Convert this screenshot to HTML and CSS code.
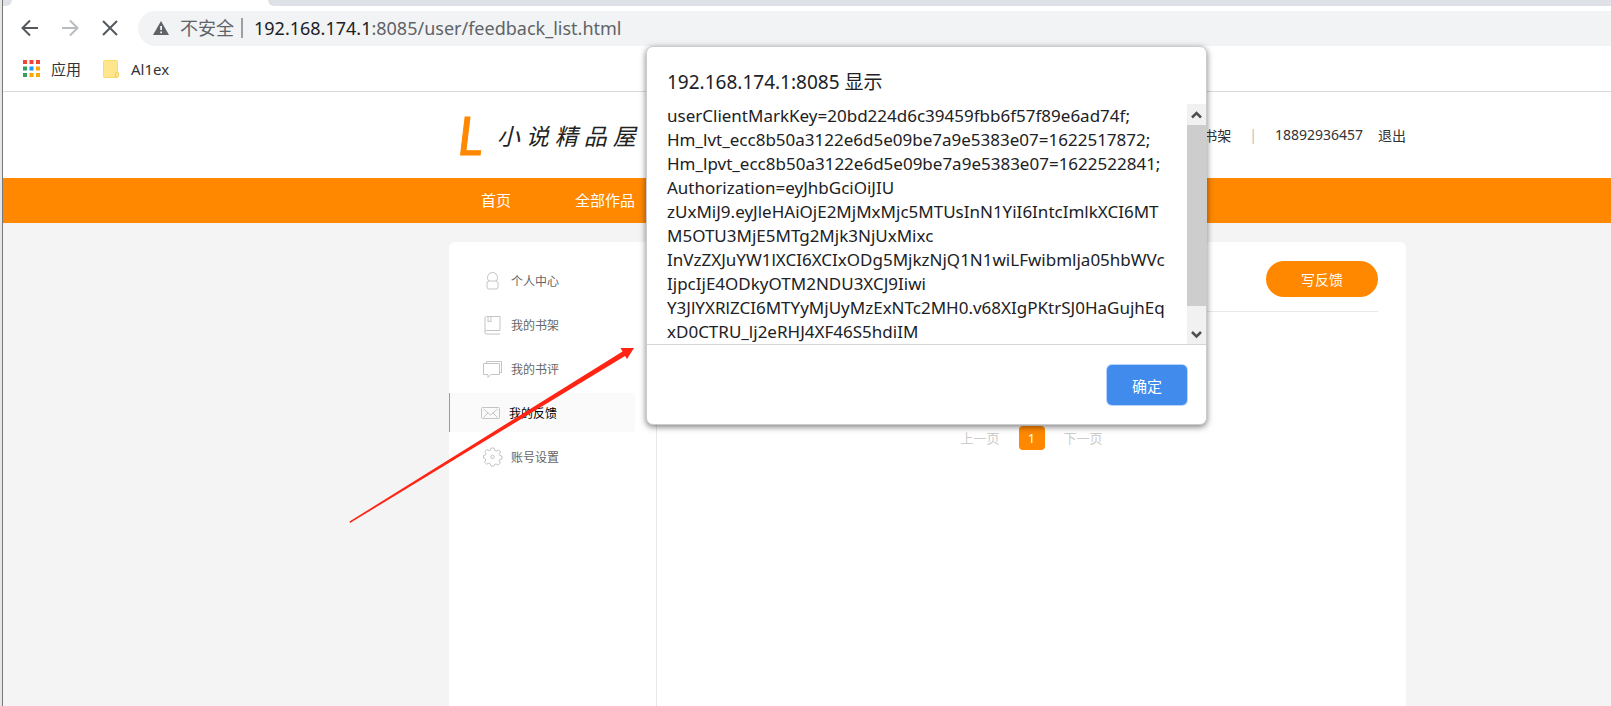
FILE: index.html
```html
<!DOCTYPE html>
<html lang="zh-CN">
<head>
<meta charset="utf-8">
<title>我的反馈 - 小说精品屋</title>
<link rel="stylesheet" href="styles.css">
</head>
<body>
<div class="window">
  <header class="browser">
    <div class="tabstrip"><div class="tab-active"></div><div class="tab-rest"></div></div>
    <div class="toolbar">
      <div class="tools">
        <button class="tool" aria-label="后退"><svg width="18" height="18" viewBox="0 0 18 18"><path d="M17 9H2M9 1.500 1.500 9 9 16.500" fill="none" stroke="#55585d" stroke-width="2"/></svg></button>
        <button class="tool" aria-label="前进"><svg width="18" height="18" viewBox="0 0 18 18"><path d="M1 9h15M9 1.500 16.500 9 9 16.500" fill="none" stroke="#b9bbbd" stroke-width="2"/></svg></button>
        <button class="tool" aria-label="停止"><svg width="18" height="18" viewBox="0 0 18 18"><path d="M2 2l14 14M16 2 2 16" fill="none" stroke="#55585d" stroke-width="2"/></svg></button>
      </div>
      <div class="omnibox">
        <svg width="16" height="14" viewBox="0 0 16 14"><path d="M8 0l8 14H0z" fill="#5f6368"/><path d="M7.200 5h1.800v4H7.200zM7.200 10.500h1.800v1.700H7.200z" fill="#f1f3f4"/></svg>
        <span class="insecure">不安全</span>
        <span class="address"><span class="host">192.168.174.1</span>:8085/user/feedback_list.html</span>
      </div>
    </div>
    <nav class="bookmarks">
      <a href="#" class="bookmark"><svg width="17" height="17" viewBox="0 0 17 17"><path d="M0 0h4v4H0zM6.500 0h4v4h-4zM13 0h4v4h-4z" fill="#f44336"/><path d="M0 6.500h4v4H0zM0 13h4v4H0z" fill="#34a05f"/><path d="M6.500 6.500h4v4h-4z" fill="#2196f3"/><path d="M13 6.500h4v4h-4zM6.500 13h4v4h-4zM13 13h4v4h-4z" fill="#fba800"/></svg>应用</a>
      <a href="#" class="bookmark"><svg width="17" height="18" viewBox="0 0 17 18"><rect x=".5" y=".5" width="14" height="17" rx="1" fill="#ffe58b" stroke="#fadb69"/><path d="M12.500 17.500v-4q0-1.500 1.500-1.500t1.500 1.500v2q0 2-3 2z" fill="#ffe58b" stroke="#f2cf50"/></svg>Al1ex</a>
    </nav>
  </header>

  <div class="site">
    <header class="band site-head">
      <div class="head-inner">
        <a href="#" class="logo"><span class="mark">L</span><span class="name">小 说 精 品 屋</span></a>
        <div class="account"><a href="#">我的书架</a><span class="bar">|</span><a href="#">18892936457</a><a href="#" class="exit">退出</a></div>
      </div>
    </header>
    <nav class="band site-nav"><div class="nav-inner"><a href="#">首页</a><a href="#">全部作品</a></div></nav>
    <div class="band site-body">
      <div class="card">
        <aside class="side">
          <a href="#"><svg width="20" height="20" viewBox="0 0 20 20"><circle cx="9.500" cy="6.500" r="5"/><rect x="4" y="10" width="11" height="8" rx="2" fill="#fff"/></svg>个人中心</a>
          <a href="#"><svg width="20" height="20" viewBox="0 0 20 20"><path d="M17 15.500V1.500H3.500q-1.500 0-1.500 1.500v15q0 1 1.500 1h13.500M2 16.500q0-1 1.500-1h13.500M5 2v5l1.500-1 1.500 1V2"/></svg>我的书架</a>
          <a href="#"><svg width="20" height="20" viewBox="0 0 20 20"><path d="M3.500 4.500v-2h15v11h-2M.5 4.500h16v11H8l-3 3v-3H.5z"/></svg>我的书评</a>
          <a href="#" class="active"><svg width="20" height="20" viewBox="0 0 20 20"><rect x=".5" y="4.500" width="18" height="11" rx="1"/><path d="M2.500 6l7 6 7-6M2.500 14.500 7 10M16.500 14.500 12 10"/></svg>我的反馈</a>
          <a href="#"><svg width="20" height="20" viewBox="0 0 20 20"><path d="M8 1h3l.8 2.500 1.500.6L15.700 3 17.500 5 16.200 7.300l.6 1.200L19 9v3l-2.300.6-.6 1.400 1.200 2.200-2.100 1.900-2.200-1.200-1.300.6L11 19H8l-.8-2.300-1.400-.6-2.200 1.200-2-2 1.200-2.200-.6-1.300L.5 11V8.500L2.400 8l.6-1.400L1.800 4.500 3.900 2.500 6 3.700l1.300-.5z"/><circle cx="9.500" cy="10" r="1.700"/></svg>账号设置</a>
        </aside>
        <main class="main">
          <div class="main-head"><button class="write">写反馈</button></div>
          <div class="pager"><a href="#">上一页</a><a href="#" class="current">1</a><a href="#">下一页</a></div>
        </main>
      </div>
    </div>
  </div>
</div>

<section class="dialog" role="dialog" aria-labelledby="dialog-title">
  <h1 id="dialog-title">192.168.174.1:8085 显示</h1>
  <div class="dialog-body">
    <p>userClientMarkKey=20bd224d6c39459fbb6f57f89e6ad74f;<br>Hm_lvt_ecc8b50a3122e6d5e09be7a9e5383e07=1622517872;<br>Hm_lpvt_ecc8b50a3122e6d5e09be7a9e5383e07=1622522841;<br>Authorization=eyJhbGciOiJIU<br>zUxMiJ9.eyJleHAiOjE2MjMxMjc5MTUsInN1YiI6IntcImlkXCI6MT<br>M5OTU3MjE5MTg2Mjk3NjUxMixc<br>InVzZXJuYW1lXCI6XCIxODg5MjkzNjQ1N1wiLFwibmlja05hbWVc<br>IjpcIjE4ODkyOTM2NDU3XCJ9Iiwi<br>Y3JlYXRlZCI6MTYyMjUyMzExNTc2MH0.v68XIgPKtrSJ0HaGujhEq<br>xD0CTRU_lj2eRHJ4XF46S5hdiIM</p>
    <div class="scrollbar">
      <svg width="18" height="21" viewBox="0 0 18 21"><path d="M5 13.500 9.500 9 14 13.500" fill="none" stroke="#505050" stroke-width="2.500"/></svg>
      <div class="thumb"></div>
      <svg width="18" height="21" viewBox="0 0 18 21"><path d="M5 9l4.500 4.500L14 9" fill="none" stroke="#505050" stroke-width="2.500"/></svg>
    </div>
  </div>
  <footer><button class="ok">确定</button></footer>
</section>

<svg class="arrow" width="286" height="176" viewBox="0 0 286 176" aria-hidden="true"><path d="M.5 174.500 273.500 4.500 271.500 1 285 1 278 12 276 9 1 176z" fill="#ff2414"/></svg>
</body>
</html>
```
FILE: styles.css
```css
* { box-sizing: border-box; }
body {
  margin: 0;
  height: 100vh;
  overflow: hidden;
  position: relative;
  background: #e6e6e6;
  color: #333;
  font-family: "Noto Sans", "Noto Sans CJK SC", sans-serif;
  font-size: 14px;
}
a { color: inherit; text-decoration: none; }
button { border: 0; padding: 0; font: inherit; cursor: pointer; }

.window {
  display: flex;
  flex-direction: column;
  height: 100%;
  margin-left: 2px;
  border-left: 1px solid #777;
  background: #fff;
}
.tabstrip { display: flex; height: 6px; background: #fff; }
.tabstrip::before { content: ""; width: 9px; background: #dee1e6; border-bottom-right-radius: 6px; }
.tab-active { width: 256px; }
.tab-rest { flex: 1; background: #dee1e6; border-bottom-left-radius: 6px; }
.toolbar { display: flex; align-items: center; gap: 19px; height: 40px; padding: 4px 0 0 18px; }
.tools { display: flex; gap: 22px; }
.tool { display: flex; width: 18px; height: 18px; background: none; }
.omnibox {
  display: flex;
  align-items: center;
  flex: 1;
  height: 35px;
  padding-left: 15px;
  border-radius: 18px 0 0 18px;
  background: #f1f3f4;
  color: #5f6368;
  font-size: 18px;
  line-height: 24px;
}
.insecure { margin: 0 11px; padding-right: 7px; border-right: 2px solid #9aa0a6; line-height: 20px; }
.host { color: #202124; }
.bookmarks { display: flex; gap: 22px; height: 46px; padding: 0 20px; border-bottom: 1px solid #dadada; font-size: 15px; }
.bookmark { display: flex; align-items: center; gap: 11px; }

.site { display: flex; flex-direction: column; flex: 1; background: #f4f4f4; }
.band { display: grid; grid-template-columns: minmax(0, 446fr) 957px minmax(0, 205fr); }
.band > * { grid-column: 2; }
.site-head { background: #fff; height: 86px; }
.head-inner { display: flex; align-items: center; justify-content: space-between; }
.logo { display: flex; align-items: center; gap: 14px; padding-left: 9px; color: #222; }
.mark { color: #f80; font: italic 52px/52px Lato, sans-serif; -webkit-text-stroke: 1px #f80; }
.name { font-size: 23px; font-style: italic; white-space: nowrap; }
.account { display: flex; }
.bar { margin: 0 18px; color: #bbb; }
.exit { margin-left: 15px; }
.site-nav { background: #f80; color: #fff; font-size: 15px; line-height: 45px; }
.nav-inner { display: flex; gap: 64px; padding-left: 32px; }

.site-body { flex: 1; padding-top: 19px; }
.card { display: flex; background: #fff; border-radius: 6px 6px 0 0; }
.side { display: flex; flex-direction: column; gap: 5px; width: 208px; padding: 19px 21px 0 0; border-right: 1px solid #e9e9e9; color: #666; font-size: 12px; }
.side a { display: flex; align-items: center; gap: 8px; height: 39px; padding-left: 34px; }
.side .active { border-left: 1px solid #f80; padding-left: 31px; background: #fafafa; color: #000; }
.side svg { fill: none; stroke: #c4c4c4; }
.main { flex: 1; padding: 19px 28px; }
.main-head { display: flex; justify-content: flex-end; padding-bottom: 14px; border-bottom: 1px solid #e9e9e9; }
.write { width: 112px; height: 36px; border-radius: 18px; background: #f80; color: #fff; }
.pager { display: flex; justify-content: center; gap: 19px; margin-top: 114px; color: #ccc; font-size: 13px; line-height: 24px; }
.current { width: 26px; border-radius: 4px; background: #f80; color: #fff; text-align: center; }

.dialog {
  position: absolute;
  top: 46px;
  left: 646px;
  width: 561px;
  border: 1px solid #ccc;
  border-radius: 7px;
  background: #fff;
  box-shadow: 0 2px 6px rgba(0, 0, 0, 0.5);
  color: #202124;
}
.dialog h1 { margin: 0; padding: 22px 20px 9px; font-size: 19px; font-weight: 400; line-height: 26px; }
.dialog-body { display: flex; padding-left: 20px; }
.dialog-body p { flex: 1; margin: 0; font-size: 17px; line-height: 24px; white-space: nowrap; }
.scrollbar { display: flex; flex-direction: column; width: 19px; background: #f1f1f1; }
.thumb { height: 181px; background: #cdcdcd; }
.scrollbar svg:last-child { margin-top: auto; }
.dialog footer { display: flex; justify-content: flex-end; padding: 20px 19px 19px; border-top: 1px solid #d5d6d9; }
.ok { width: 80px; height: 40px; border-radius: 5px; background: #408bec; box-shadow: 0 0 0 1px #b7d4fa; color: #fff; font-size: 15px; }

.arrow { position: absolute; left: 349px; top: 347px; }
```
